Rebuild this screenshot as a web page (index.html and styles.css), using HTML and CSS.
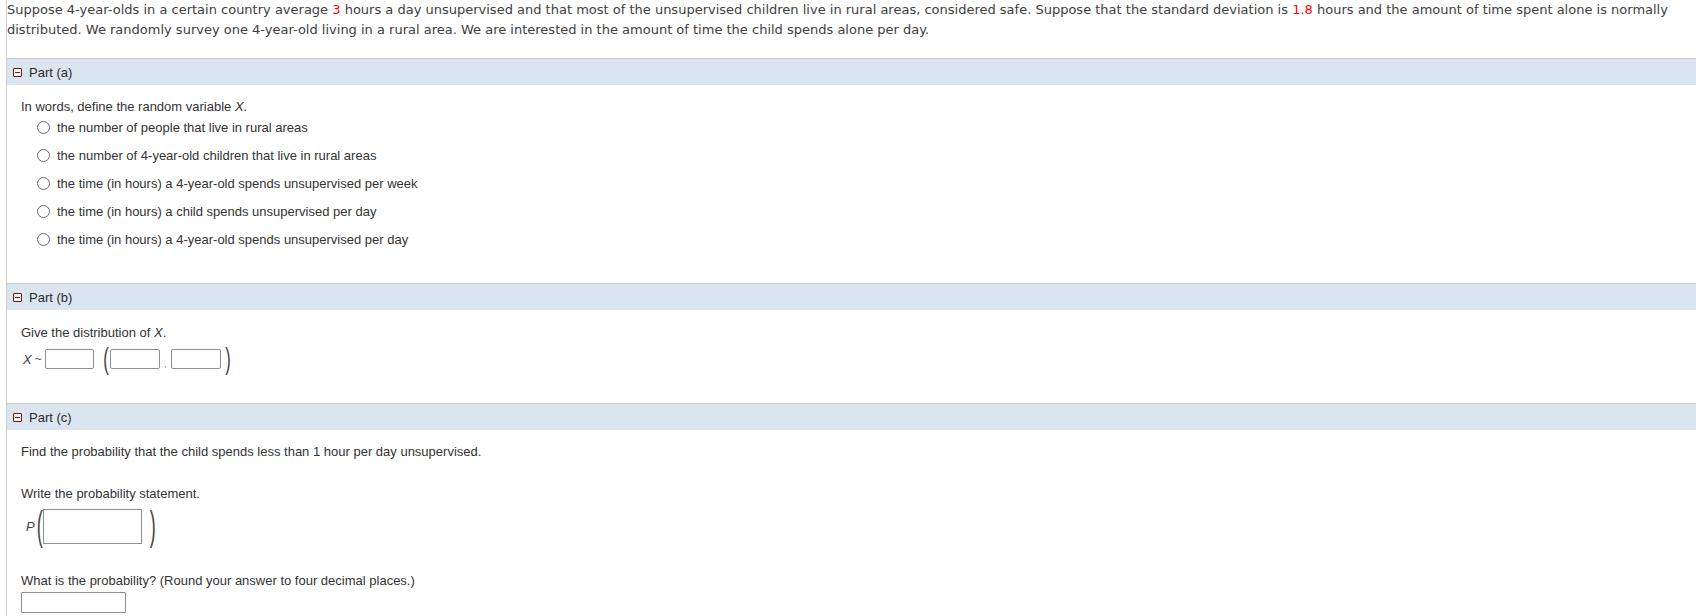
FILE: index.html
```html
<!DOCTYPE html>
<html>
<head>
<meta charset="utf-8">
<link rel="stylesheet" href="styles.css">
</head>
<body>
<div class="wrap">
  <div class="problem">Suppose 4-year-olds in a certain country average <span class="red">3</span> hours a day unsupervised and that most of the unsupervised children live in rural areas, considered safe. Suppose that the standard deviation is <span class="red">1.8</span> hours and the amount of time spent alone is normally distributed. We randomly survey one 4-year-old living in a rural area. We are interested in the amount of time the child spends alone per day.</div>

  <div class="part">
    <div class="band"><span class="toggle"></span>Part (a)</div>
    <div class="body body-a">
      <div class="line">In words, define the random variable <i>X</i>.</div>
      <div class="options">
        <label class="opt"><span class="radio"></span>the number of people that live in rural areas</label>
        <label class="opt"><span class="radio"></span>the number of 4-year-old children that live in rural areas</label>
        <label class="opt"><span class="radio"></span>the time (in hours) a 4-year-old spends unsupervised per week</label>
        <label class="opt"><span class="radio"></span>the time (in hours) a child spends unsupervised per day</label>
        <label class="opt"><span class="radio"></span>the time (in hours) a 4-year-old spends unsupervised per day</label>
      </div>
    </div>
  </div>

  <div class="part">
    <div class="band"><span class="toggle"></span>Part (b)</div>
    <div class="body body-b">
      <div class="line">Give the distribution of <i>X</i>.</div>
      <div class="dist">
        <span class="var">X</span><span class="tilde">~</span><span class="box box-s"></span><span class="paren pl">(</span><span class="box box-m"></span><span class="comma">,</span><span class="box box-m2"></span><span class="paren pr">)</span>
      </div>
    </div>
  </div>

  <div class="part">
    <div class="band"><span class="toggle"></span>Part (c)</div>
    <div class="body body-c">
      <div class="line">Find the probability that the child spends less than 1 hour per day unsupervised.</div>
      <div class="line l-write">Write the probability statement.</div>
      <div class="prob">
        <span class="pvar">P</span><span class="paren big pl2">(</span><span class="box box-l"></span><span class="paren big pr2">)</span>
      </div>
      <div class="line l-what">What is the probability? (Round your answer to four decimal places.)</div>
      <div class="box box-ans"></div>
    </div>
  </div>
</div>
</body>
</html>
```

FILE: styles.css
```css
html, body {
  margin: 0;
  padding: 0;
  background: #fff;
}
.wrap {
  margin-left: 6px;
  border-left: 1px solid #cfcfcf;
  min-height: 616px;
}
.problem {
  font-family: "DejaVu Sans", Verdana, sans-serif;
  font-size: 13px;
  line-height: 20px;
  color: #404040;
  padding-top: 0;
  padding-right: 20px;
  height: 58px;
  box-sizing: border-box;
  overflow: hidden;
}
.red {
  color: #f00;
}
.band {
  border-top: 1px solid #c8c8c8;
  background: #dae5ef;
  height: 26px;
  display: flex;
  align-items: center;
  font-family: "Liberation Sans", Arial, sans-serif;
  font-size: 13px;
  color: #2b2b2b;
  padding-left: 6px;
}
.toggle {
  width: 7px;
  height: 7px;
  border: 1px solid #7a0f14;
  border-radius: 1px;
  background: #f4f4f4;
  position: relative;
  margin-right: 7px;
}
.toggle::after {
  content: "";
  position: absolute;
  left: 1px;
  right: 1px;
  top: 3px;
  height: 1px;
  background: #333;
}
.body {
  font-family: "Liberation Sans", Arial, sans-serif;
  font-size: 13px;
  color: #333;
  padding-left: 14px;
}
.line {
  line-height: 16px;
  height: 16px;
}
.body-a {
  padding-top: 14px;
  height: 198px;
  box-sizing: border-box;
}
.options {
  margin-top: -2px;
  padding-left: 16px;
}
.opt {
  display: flex;
  align-items: center;
  height: 28px;
}
.radio {
  width: 11px;
  height: 11px;
  border: 1px solid #666;
  border-radius: 50%;
  margin-right: 7px;
  background: #fff;
}
.body-b {
  padding-top: 15px;
  height: 93px;
  box-sizing: border-box;
}
.dist {
  margin-top: 4px;
  height: 28px;
  display: flex;
  align-items: center;
  padding-left: 2px;
}
.var, .pvar {
  font-style: italic;
  font-size: 13px;
  color: #444;
}
.tilde {
  margin-left: 3px;
  margin-right: 3px;
  font-size: 12px;
  color: #555;
}
.box {
  display: inline-block;
  border: 1px solid #8f8f8f;
  border-radius: 2px;
  background: #fff;
  box-sizing: border-box;
}
.box-s { width: 49px; height: 20px; }
.box-m { width: 50px; height: 20px; }
.box-m2 { width: 50px; height: 20px; }
.paren {
  font-family: "Liberation Sans", Arial, sans-serif;
  font-size: 30px;
  line-height: 28px;
  color: #444;
  display: inline-block;
  transform: scaleX(0.55);
  font-weight: 300;
}
.pl { margin-left: 7px; margin-right: -1px; }
.pr { margin-left: 2px; }
.comma {
  width: 11px;
  text-align: center;
  font-size: 9px;
  color: #666;
  align-self: flex-end;
  margin-bottom: 4px;
}
.body-c {
  padding-top: 14px;
}
.l-write { margin-top: 26px; }
.prob {
  margin-top: 7px;
  height: 35px;
  display: flex;
  align-items: center;
  padding-left: 5px;
}
.paren.big {
  font-size: 40px;
  line-height: 35px;
  transform: scaleX(0.45);
}
.pl2 { margin-left: -2px; margin-right: -3px; }
.pr2 { margin-left: 4px; }
.box-l { width: 99px; height: 35px; border-radius: 0; }
.l-what { margin-top: 29px; }
.box-ans {
  display: block;
  margin-top: 3px;
  width: 105px;
  height: 21px;
  border-radius: 1px;
}
```
